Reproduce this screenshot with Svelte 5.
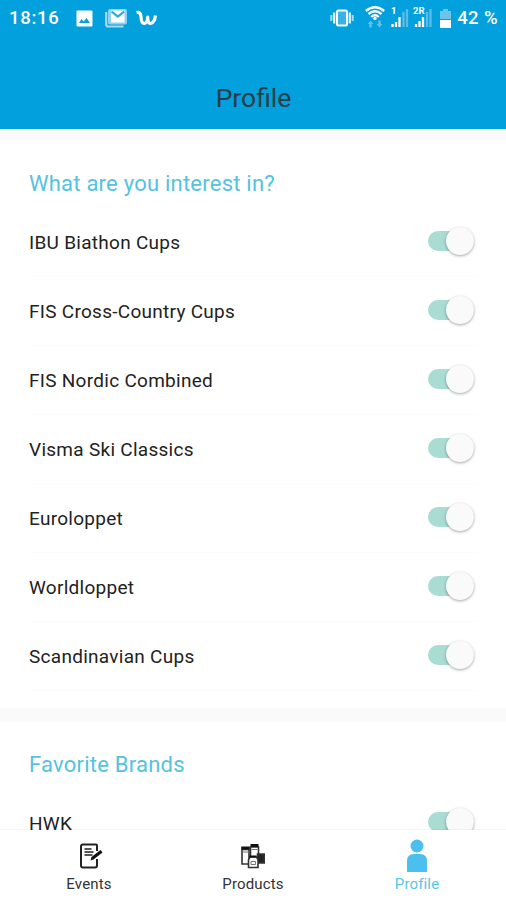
<script>
    let sections = $state([
        {
            title: "What are you interest in?",
            items: [
                { name: "IBU Biathon Cups", on: true },
                { name: "FIS Cross-Country Cups", on: true },
                { name: "FIS Nordic Combined", on: true },
                { name: "Visma Ski Classics", on: true },
                { name: "Euroloppet", on: true },
                { name: "Worldloppet", on: true },
                { name: "Scandinavian Cups", on: true },
            ],
        },
        {
            title: "Favorite Brands",
            items: [{ name: "HWK", on: true }],
        },
    ]);

    let active = $state("Profile");
    const tabs = ["Events", "Products", "Profile"];
</script>

<div class="screen">
    <header>
        <div class="status">
            <span class="clock">18:16</span>
            <svg class="picture" width="17" height="17" viewBox="0 0 17 17">
                <rect x="0.5" y="0.5" width="16" height="16" rx="1" fill="#fff" />
                <path d="M3 13l2.500-4 2.300 2.500L10.500 8l3.500 5z" fill="#0b9fdc" />
            </svg>
            <svg class="mail" width="23" height="20" viewBox="0 0 23 20">
                <path d="M1.200 4v12.500q0 2 2 2h15.300" fill="none" stroke="#a5dbf2" stroke-width="2.200" />
                <rect x="3" y="1" width="19" height="15.500" rx="2" fill="#8fd2ef" />
                <path d="M6 2.500h13.500v12H6z" fill="#fff" />
                <path d="M6.500 3.500l6.300 5 6.300-5" fill="none" stroke="#2aa9dd" stroke-width="2.200" />
            </svg>
            <svg class="wish" width="22" height="18" viewBox="0 0 22 18">
                <path d="M.5 3.500Q4.500 2.500 5 7.500Q5.200 14.500 8.300 14.500Q11.500 14 11.700 8Q11.500 14.500 14.500 14.500Q18.500 14 19.500 6.500" fill="none" stroke="#fff" stroke-width="3.200" stroke-linejoin="round" />
            </svg>
            <span class="spacer"></span>
            <svg class="vibrate" width="24" height="18" viewBox="0 0 24 18">
                <rect x="7" y="1.500" width="10" height="15" rx="1.500" fill="#38b3e3" stroke="#fff" stroke-width="2" />
                <path d="M4.200 3.500v11M19.800 3.500v11" stroke="#e4f5fc" stroke-width="2.200" />
                <path d="M1.300 6v6M22.700 6v6" stroke="#a8dcf3" stroke-width="2" />
            </svg>
            <svg class="wifi" width="20" height="22" viewBox="0 0 20 22">
                <path d="M.8 5Q10-2.500 19.200 5M3.500 8Q10 2.500 16.500 8M6.200 11Q10 7.600 13.800 11" fill="none" stroke="#fff" stroke-width="2.300" />
                <circle cx="10" cy="12.500" r="1.700" fill="#fff" />
                <path d="M2.500 18L5.500 14.500l3 3.500H6.700v3.500H4.300V18zM11.500 18l3 3.500 3-3.500h-1.800v-3.500h-2.400V18z" fill="#63c1e9" />
            </svg>
            <svg class="signal one" width="18" height="22" viewBox="0 0 18 22">
                <text x="0" y="8">1</text>
                <path d="M1.500 18v3M5 16v5M8.500 11v10" stroke="#fff" stroke-width="2.300" />
                <path d="M12.500 6v15M16 3v18" stroke="#5bbde7" stroke-width="2.300" />
            </svg>
            <svg class="signal" width="20" height="22" viewBox="0 0 20 22">
                <text x="0" y="8">2R</text>
                <path d="M3 18v3M6.500 15v6M10 11v10" stroke="#fff" stroke-width="2.300" />
                <path d="M14 6v15M17.500 3v18" stroke="#5bbde7" stroke-width="2.300" />
            </svg>
            <svg class="battery" width="11" height="19" viewBox="0 0 11 19">
                <path d="M3 0h5v2h3v8H0V2h3z" fill="#6bc5ea" />
                <path d="M0 11h11v8H0z" fill="#fff" />
            </svg>
            <span class="percent">42 %</span>
        </div>
        <h1>Profile</h1>
    </header>

    <main>
        {#each sections as section}
            <section>
                <h2>{section.title}</h2>
                {#each section.items as item}
                    <div class="row">
                        <span class="name">{item.name}</span>
                        <button
                            class="toggle"
                            class:on={item.on}
                            aria-label={item.name}
                            onclick={() => (item.on = !item.on)}
                        >
                            <span class="knob"></span>
                        </button>
                    </div>
                {/each}
            </section>
        {/each}
    </main>

    <nav>
        {#each tabs as tab}
            <button class="tab" class:active={active === tab} onclick={() => (active = tab)}>
                {#if tab === "Events"}
                    <svg class="events" width="24" height="26" viewBox="0 0 24 26">
                        <path d="M18 8V2.500q0-1-1-1H4q-2 0-2 2v19q0 2 2 2h12q2 0 2-2V16" fill="none" stroke="#222" stroke-width="2" />
                        <path d="M5.500 6h7M5.500 9h9M5.500 12h8" stroke="#222" stroke-width="1.500" />
                        <path d="M11.500 17.500l1-3.500 9-7 2 2.500-9 7z" fill="#111" />
                    </svg>
                {:else if tab === "Products"}
                    <svg width="24" height="26" viewBox="0 0 24 26">
                        <g fill="#fff" stroke="#333" stroke-width="1.600">
                            <path d="M9.500 4h8v12h-8z" />
                            <path d="M1 6.500h7V21H1z" />
                            <path d="M16.500 11h7v9h-7z" fill="#222" />
                            <path d="M9 14h6.500l1.500 3v7.500H7.500V17z" />
                        </g>
                        <path d="M9.500 1h8v3h-8zM.2 3.500h8.600v3H.2zM8.500 12.500h7v2h-7z" fill="#111" />
                        <path d="M1.500 9h6M10.500 6.500h6M10 18.500h4.500v3H10z" fill="none" stroke="#777" />
                    </svg>
                {:else}
                    <svg class="person" width="22" height="34" viewBox="0 0 22 34">
                        <circle cx="11" cy="7" r="6.500" />
                        <path d="M1 33V22q0-7 7-7h6q7 0 7 7v11z" />
                    </svg>
                {/if}
                <span>{tab}</span>
            </button>
        {/each}
    </nav>
</div>

<style>
    :global(body) {
        margin: 0;
    }

    .screen {
        display: flex;
        flex-direction: column;
        height: 900px;
        overflow: hidden;
        background: #fafafa;
        font-family: Roboto, sans-serif;
    }

    header {
        flex: none;
        height: 129px;
        background: #02a0dc;
    }

    .status {
        display: flex;
        align-items: center;
        box-sizing: border-box;
        height: 36px;
        padding: 0 8px 0 9px;
        color: #fff;
        font-size: 18.5px;
        font-weight: 500;
        letter-spacing: 0.7px;
    }

    .status svg {
        flex: none;
    }

    .clock {
        width: 67px;
    }

    .picture {
        margin-right: 12px;
    }

    .mail {
        margin-right: 8px;
    }

    .spacer {
        flex: 1;
    }

    .vibrate {
        margin-right: 11px;
    }

    .wifi {
        margin: 0 6px 3px 0;
    }

    .signal {
        margin: 0 7px 3px 0;
    }

    .signal.one {
        margin-right: 4px;
    }

    .signal text {
        fill: #fff;
        font-size: 9.5px;
        font-weight: 700;
        letter-spacing: 0;
    }

    .battery {
        margin-right: 6px;
    }

    .percent {
        letter-spacing: 0.4px;
    }

    h1 {
        margin: 44px 0 0;
        padding-left: 1px;
        color: #263e49;
        font-size: 26.5px;
        font-weight: 400;
        line-height: 36px;
        text-align: center;
    }

    main {
        flex: 1;
        min-height: 0;
        overflow: hidden;
    }

    section {
        box-sizing: border-box;
        margin-top: 11px;
        padding: 29px 29px 17px;
        background: #fff;
    }

    section + section {
        margin-top: 14px;
        padding-top: 28px;
    }

    h2 {
        margin: 0;
        color: #55c2df;
        font-size: 22px;
        font-weight: 400;
        line-height: 29px;
        letter-spacing: 0.23px;
        padding-bottom: 10px;
    }

    .row {
        display: flex;
        align-items: center;
        justify-content: space-between;
        box-sizing: border-box;
        height: 69px;
        border-bottom: 1px solid #fcfcfc;
    }

    .name {
        color: #222;
        font-size: 19px;
        letter-spacing: 0.28px;
    }

    .toggle {
        display: flex;
        align-items: center;
        width: 46px;
        height: 20px;
        margin: 0 3px 2px 0;
        padding: 0;
        border: 0;
        border-radius: 10px;
        background: #ccc;
    }

    .toggle.on {
        justify-content: flex-end;
        background: #a9dcd3;
    }

    .knob {
        flex: none;
        width: 28px;
        height: 28px;
        border-radius: 50%;
        background: #fafafa;
        box-shadow: 0 1px 3px rgba(0, 0, 0, 0.35);
    }

    nav {
        display: flex;
        flex: none;
        box-sizing: border-box;
        height: 70px;
        padding: 0 7px;
        box-shadow: 0 -1px 1px rgba(0, 0, 0, 0.04);
        background: #fff;
    }

    .tab {
        display: flex;
        flex: 1;
        flex-direction: column;
        align-items: center;
        justify-content: flex-end;
        padding: 0 0 7px;
        border: 0;
        background: none;
        color: #333;
        font-family: inherit;
        font-size: 15px;
        line-height: 18px;
        letter-spacing: 0.15px;
    }

    .tab svg {
        margin-bottom: 6px;
    }

    .tab .events {
        margin-left: 3px;
    }

    .tab .person {
        margin-bottom: 2px;
        fill: #4bc0ee;
    }

    .active {
        color: #55c8e4;
    }
</style>
